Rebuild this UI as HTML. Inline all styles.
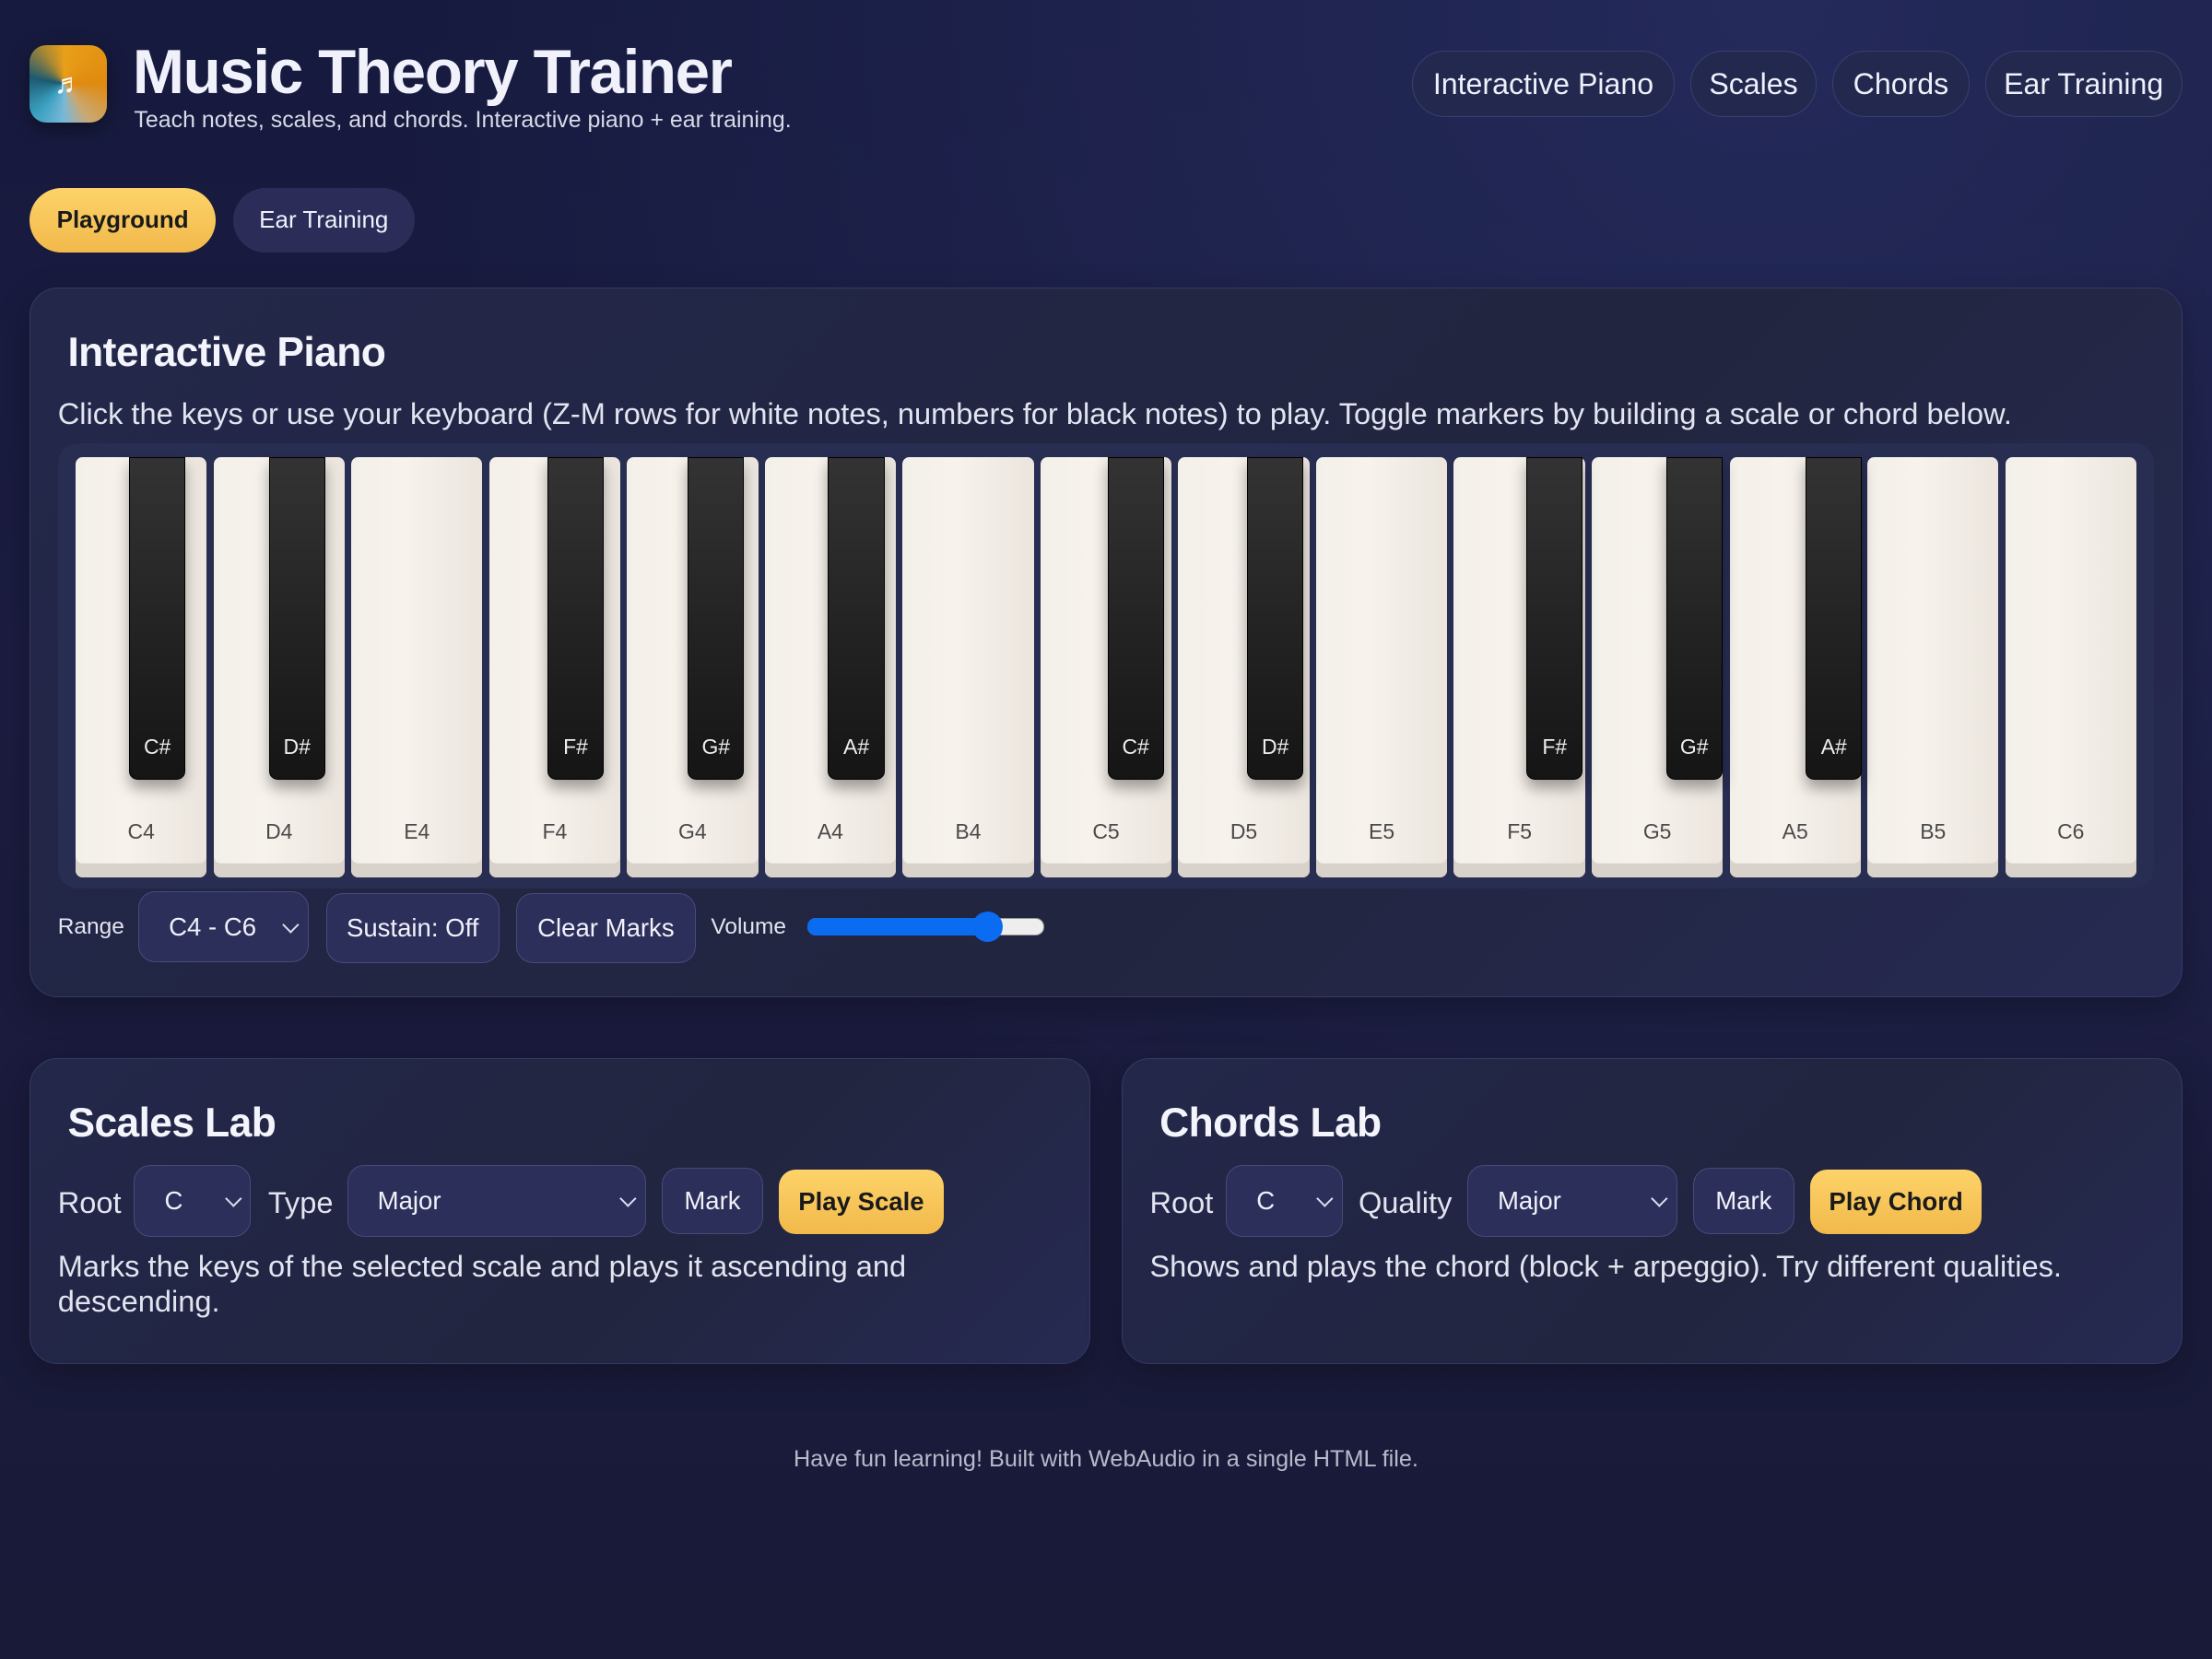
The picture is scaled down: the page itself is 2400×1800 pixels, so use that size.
<!DOCTYPE html>
<html><head><meta charset="utf-8"><style>
html{zoom:1.5306}
*{box-sizing:border-box;margin:0;padding:0}
body{width:1568px;height:1176px;overflow:hidden;position:relative;font-family:"Liberation Sans",sans-serif;color:#eef0fa;
background:radial-gradient(ellipse at 80% 0%,#242a5a 0%,rgba(36,42,90,0) 55%),linear-gradient(180deg,#161a3e 0%,#1b1c40 40%,#191a38 100%);}
.a{position:absolute}
.logo{left:21px;top:32px;width:55px;height:55px;border-radius:12px;background:conic-gradient(from 0deg at 45% 50%,#e8a018,#e08a10 25%,#caa870 40%,#7ab8d8 50%,#3aa0c0 62%,#1b5a70 78%,#b08a30 92%,#e8a018);box-shadow:0 4px 14px rgba(0,0,0,.4);color:#fff;font-size:20px;display:flex;align-items:center;justify-content:center}
h1{position:absolute;left:94px;top:26px;font-size:44px;font-weight:bold;letter-spacing:-.9px;color:#f0f1fb}
.sub{left:95px;top:76px;font-size:16.3px;color:#d8dae8}
.pill{position:absolute;height:47px;border-radius:24px;background:#23284f;border:1px solid #3a3f6c;color:#eef0fa;font-size:21px;display:flex;align-items:center;justify-content:center}
.tab{position:absolute;height:46px;border-radius:23px;font-size:17px;display:flex;align-items:center;justify-content:center}
.card{position:absolute;border-radius:20px;background:linear-gradient(135deg,#23274a,#22253f 60%,#262a52);border:1px solid #363a62;box-shadow:0 8px 24px rgba(0,0,0,.25)}
h2{position:absolute;font-size:29px;font-weight:bold;color:#f3f4fc;letter-spacing:-.4px}
.t{position:absolute;font-size:21.3px;color:#e2e4f0;white-space:nowrap}
.kb{left:41px;top:314px;width:1486px;height:316px;border-radius:14px;background:#282d52}
.w{position:absolute;top:324px;width:93px;height:298px;border-radius:5px;background:linear-gradient(90deg,#f3efe9,#f7f2ec 40%,#ebe5de);box-shadow:inset 0 -10px 0 #d9d2cb;color:#4a4a4a;font-size:15px;text-align:center;padding-top:257px}
.b{position:absolute;top:324px;width:40px;height:229px;border-radius:0 0 6px 6px;background:linear-gradient(180deg,#333,#151515);border:1px solid #000;box-shadow:0 6px 10px rgba(0,0,0,.35);color:#eee;font-size:15px;text-align:center;padding-top:196px}
.ctl{position:absolute;height:50px;border-radius:12px;background:#2c2f5a;border:1px solid #474b78;color:#f0f1fa;font-size:18px;display:flex;align-items:center;justify-content:center}
.sel{justify-content:flex-start;padding-left:21px}
.chev{position:absolute;right:8px;top:19px}
.chev::after{content:"";display:block;width:7px;height:7px;border-right:1.5px solid #dde;border-bottom:1.5px solid #dde;transform:rotate(45deg)}
.y{background:linear-gradient(180deg,#fdd36a,#f2b94a);color:#1a1a1a;font-weight:bold;border:none}
</style></head><body>
<div class="a logo">♬</div>
<h1>Music Theory Trainer</h1>
<div class="a sub">Teach notes, scales, and chords. Interactive piano + ear training.</div>
<div class="pill" style="left:1001px;top:36px;width:186px">Interactive Piano</div>
<div class="pill" style="left:1198px;top:36px;width:90px">Scales</div>
<div class="pill" style="left:1299px;top:36px;width:97px">Chords</div>
<div class="pill" style="left:1407px;top:36px;width:140px">Ear Training</div>
<div class="tab" style="left:21px;top:133px;width:132px;background:linear-gradient(180deg,#fdd36a,#f2b94a);color:#1a1a1a;font-weight:bold">Playground</div>
<div class="tab" style="left:165px;top:133px;width:129px;background:#2b2d58;color:#eef0fa">Ear Training</div>

<div class="card" style="left:21px;top:204px;width:1526px;height:503px"></div>
<h2 style="left:48px;top:234px">Interactive Piano</h2>
<div class="t" style="left:41px;top:281px">Click the keys or use your keyboard (Z-M rows for white notes, numbers for black notes) to play. Toggle markers by building a scale or chord below.</div>
<div class="a kb"></div>
<div class="w" style="left:53.6px">C4</div><div class="w" style="left:151.3px">D4</div><div class="w" style="left:249px">E4</div><div class="w" style="left:346.7px">F4</div><div class="w" style="left:444.4px">G4</div><div class="w" style="left:542.1px">A4</div><div class="w" style="left:639.8px">B4</div><div class="w" style="left:737.5px">C5</div><div class="w" style="left:835.2px">D5</div><div class="w" style="left:932.9px">E5</div><div class="w" style="left:1030.6px">F5</div><div class="w" style="left:1128.3px">G5</div><div class="w" style="left:1226px">A5</div><div class="w" style="left:1323.7px">B5</div><div class="w" style="left:1421.4px">C6</div>
<div class="b" style="left:91.5px">C#</div><div class="b" style="left:190.5px">D#</div><div class="b" style="left:388px">F#</div><div class="b" style="left:487.5px">G#</div><div class="b" style="left:587px">A#</div><div class="b" style="left:785px">C#</div><div class="b" style="left:884px">D#</div><div class="b" style="left:1082px">F#</div><div class="b" style="left:1181px">G#</div><div class="b" style="left:1280px">A#</div>

<div class="t" style="left:41px;top:648px;font-size:16px">Range</div>
<div class="ctl sel" style="left:98px;top:632px;width:121px">C4 - C6<span class="chev"></span></div>
<div class="ctl" style="left:231px;top:633px;width:123px">Sustain: Off</div>
<div class="ctl" style="left:366px;top:633px;width:127px">Clear Marks</div>
<div class="t" style="left:504px;top:648px;font-size:16px">Volume</div>
<div class="a" style="left:572px;top:651px;width:168px;height:12px;border-radius:6px;background:#eee;border:1px solid #999"></div>
<div class="a" style="left:572px;top:651px;width:128px;height:12px;border-radius:6px;background:#0a6cf0"></div>
<div class="a" style="left:689px;top:646px;width:22px;height:22px;border-radius:50%;background:#0a6cf0"></div>

<div class="card" style="left:21px;top:750px;width:752px;height:217px"></div>
<h2 style="left:48px;top:780px">Scales Lab</h2>
<div class="t" style="left:41px;top:840px">Root</div>
<div class="ctl sel" style="left:95px;top:826px;width:83px;height:51px">C<span class="chev"></span></div>
<div class="t" style="left:190px;top:840px">Type</div>
<div class="ctl sel" style="left:246px;top:826px;width:212px;height:51px">Major<span class="chev"></span></div>
<div class="ctl" style="left:469px;top:828px;width:72px;height:47px">Mark</div>
<div class="ctl y" style="left:552px;top:829px;width:117px;height:46px">Play Scale</div>
<div class="t" style="left:41px;top:885px;white-space:normal;width:660px;line-height:25px">Marks the keys of the selected scale and plays it ascending and descending.</div>

<div class="card" style="left:795px;top:750px;width:752px;height:217px"></div>
<h2 style="left:822px;top:780px">Chords Lab</h2>
<div class="t" style="left:815px;top:840px">Root</div>
<div class="ctl sel" style="left:869px;top:826px;width:83px;height:51px">C<span class="chev"></span></div>
<div class="t" style="left:963px;top:840px">Quality</div>
<div class="ctl sel" style="left:1040px;top:826px;width:149px;height:51px">Major<span class="chev"></span></div>
<div class="ctl" style="left:1200px;top:828px;width:72px;height:47px">Mark</div>
<div class="ctl y" style="left:1283px;top:829px;width:122px;height:46px">Play Chord</div>
<div class="t" style="left:815px;top:885px">Shows and plays the chord (block + arpeggio). Try different qualities.</div>

<div class="t" style="left:0;width:1568px;text-align:center;top:1025px;font-size:16.5px;color:#b8bacb">Have fun learning! Built with WebAudio in a single HTML file.</div>
</body></html>
